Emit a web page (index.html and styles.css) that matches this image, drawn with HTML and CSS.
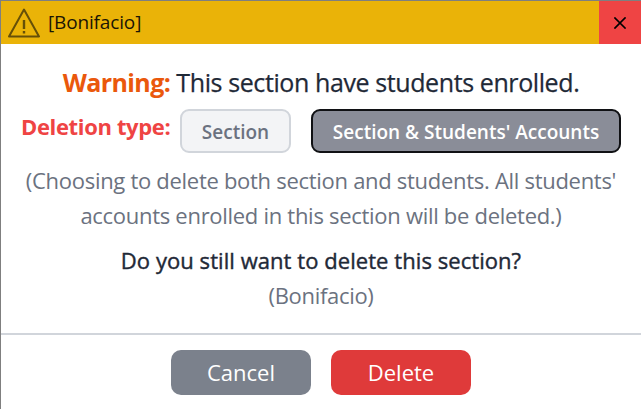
FILE: index.html
```html
<!DOCTYPE html>
<html lang="en">
<head>
<meta charset="utf-8">
<title>Delete section</title>
<link rel="stylesheet" href="styles.css">
</head>
<body>
<div class="dialog">
  <header class="bar">
    <svg class="warn" viewBox="0 0 32 30" fill="none" stroke="currentColor" stroke-width="2" stroke-linejoin="round"><path d="M16 1.6 31 28.5H1Z"/><path d="M16 12v9M16 23v2.6" stroke-width="2.4"/></svg>
    <span class="title">[Bonifacio]</span>
    <button class="close" aria-label="Close"><svg viewBox="0 0 12 12" stroke="currentColor" stroke-width="1.7" stroke-linecap="square"><path d="m1 1 10 10M11 1 1 11"/></svg></button>
  </header>
  <main class="body">
    <p class="heading"><b>Warning:</b> <span>This section have students enrolled.</span></p>
    <div class="types">
      <span class="label">Deletion type:</span>
      <button class="type section">Section</button>
      <button class="type accounts">Section &amp; Students' Accounts</button>
    </div>
    <p class="note">(Choosing to delete both section and students. All students'<br>accounts enrolled in this section will be deleted.)</p>
    <p class="question">Do you still want to delete this section?</p>
    <p class="name">(Bonifacio)</p>
  </main>
  <footer class="actions">
    <button class="action cancel">Cancel</button>
    <button class="action delete">Delete</button>
  </footer>
</div>
</body>
</html>
```
FILE: styles.css
```css
* { box-sizing: border-box; }
body { margin: 0; background: #fff; overflow: hidden; font-family: "Open Sans", "Noto Sans", sans-serif; }
p { margin: 0; white-space: nowrap; }
button { font: inherit; padding: 0; white-space: nowrap; }
.dialog { width: 641px; height: 409px; border: solid #7f7f7f; border-width: 1px 0 0 1px; display: flex; flex-direction: column; }
.bar { height: 43px; flex: none; display: flex; align-items: center; background: #eab308; padding-left: 7px; color: #1a1505; }
.warn { width: 32px; height: 30px; color: #665008; }
.title { margin-left: 8px; font-size: 19px; letter-spacing: -0.15px; line-height: 28px; padding-bottom: 2px; }
.close { margin-left: auto; width: 42px; height: 43px; border: 0; background: #ef4444; color: #000; display: flex; align-items: center; justify-content: center; }
.close svg { width: 12px; height: 12px; }
.body { height: 289px; flex: none; text-align: center; padding-top: 20px; color: #1f2937; }
.heading { font-size: 25px; line-height: 36px; letter-spacing: -0.4px; -webkit-text-stroke: 0.25px currentColor; }
.heading b { color: #ea580c; font-weight: 700; letter-spacing: -0.6px; -webkit-text-stroke: 0; }
.types { display: flex; height: 44px; margin-top: 9px; padding-left: 20px; }
.label { width: 159px; text-align: left; color: #ef4444; font-weight: 700; font-size: 22px; line-height: 34px; letter-spacing: -0.35px; white-space: nowrap; }
.type { height: 44px; border: 2px solid #d1d5db; border-radius: 9px; font-size: 19px; font-weight: 600; letter-spacing: 0; padding-top: 2px; }
.section { width: 111px; background: #f3f4f6; color: #6b7280; }
.accounts { width: 310px; margin-left: 20px; background: #8a8d98; border-color: #101114; color: #fff; }
.note { margin-top: 10px; font-size: 22px; line-height: 35px; color: #6b7280; letter-spacing: -0.29px; }
.question { margin-top: 10px; font-size: 22px; line-height: 35px; letter-spacing: 0.06px; -webkit-text-stroke: 0.4px currentColor; }
.name { font-size: 22px; line-height: 35px; color: #6b7280; letter-spacing: -0.3px; }
.actions { flex: 1; border-top: 2px solid #d1d5db; padding-top: 15px; display: flex; justify-content: center; gap: 20px; }
.action { width: 140px; height: 45px; border: 0; border-radius: 10px; color: #fff; font-size: 22px; padding-bottom: 1px; }
.cancel { background: #7b818c; }
.delete { background: #df3a3a; }
```
